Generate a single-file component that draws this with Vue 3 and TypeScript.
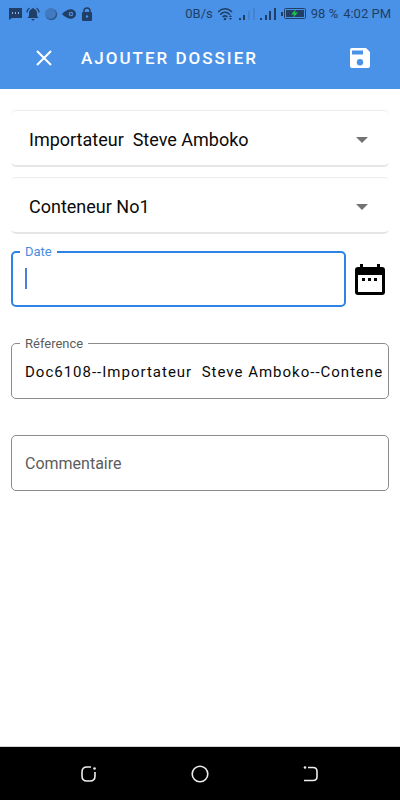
<script setup lang="ts">
import { ref } from 'vue'

const importer = ref('Importateur \u00a0Steve Amboko')
const container = ref('Conteneur No1')
const date = ref('')
const reference = ref('Doc6108--Importateur  Steve Amboko--Contene')
const comment = ref('')
</script>

<template>
  <div class="screen">
    <div class="status">
      <div class="notices">
        <svg width="14" height="14" viewBox="0 0 14 14"><path d="M1 1h13v10H4l-3 2z" fill="#203e66" /><path d="M4 5h1v2H4zM7 5h1v2H7zM10 5h1v2h-1z" fill="#8db9ee" /></svg>
        <svg width="14" height="14" viewBox="0 0 14 14"><path d="M7 1a1 1 0 0 1 1 1c2 .5 3 2 3 4v3l1.500 2h-11L3 9V6c0-2 1-3.500 3-4a1 1 0 0 1 1-1zM5.500 12h3a1.500 1.500 0 0 1-3 0z" fill="#203e66" /><path d="M1 5.500C1 3.500 2 2 3.500 1M13 5.500C13 3.500 12 2 10.500 1" fill="none" stroke="#203e66" stroke-width="1.200" /></svg>
        <svg width="14" height="14" viewBox="0 0 14 14"><circle cx="7.300" cy="7.300" r="5.900" fill="#2d568a" /><circle cx="6.500" cy="6.500" r="5.400" fill="#427abf" /></svg>
        <svg width="14" height="14" viewBox="0 0 14 14"><path d="M0 7c2-2.500 4-3 5.500-4C9 1 14 3 14 7s-5 6-8.500 4C4 10 2 9.500 0 7z" fill="#203e66" /><circle cx="9" cy="7" r="2.300" fill="#4a92e8" /><path d="M8.200 5.400L10.800 7 8.200 8.600z" fill="#203e66" /></svg>
        <svg width="14" height="14" viewBox="0 0 14 14"><path d="M4 6V4a3 3 0 0 1 6 0v2" fill="none" stroke="#203e66" stroke-width="1.500" /><rect x="2" y="5" width="10" height="9" rx="1" fill="#203e66" /><circle cx="7" cy="9.500" r="1.200" fill="#4a92e8" /></svg>
      </div>
      <div class="signals">
        <span>0B/s</span>
        <svg width="16" height="14" viewBox="0 0 16 14"><path d="M0 5c4-4.500 10-4.500 14 0M2.200 7.600c3-3 6.600-3 9.600 0M4.500 10c1.700-1.500 3.300-1.500 5 0" fill="none" stroke="#203e66" stroke-width="1.500" /><circle cx="7" cy="12" r="1.300" fill="#203e66" /><path d="M11 10l1.500-2 1.500 2M11 11h3l-1.500 2z" fill="#203e66" /></svg>
        <svg width="16" height="14" viewBox="0 0 16 14"><path d="M0 11h2v2H0zM4 8h2v5H4z" fill="#203e66" /><path d="M9 4h2v9H9zM14 1h2v12h-2z" fill="#4384d2" /></svg>
        <svg width="16" height="14" viewBox="0 0 16 14"><path d="M0 11h2v2H0zM5 8h2v5H5zM9 4h2v9H9zM14 1h2v12h-2z" fill="#203e66" /></svg>
        <svg width="25" height="14" viewBox="0 0 25 14"><path d="M0 5h2v4H0z" fill="#203e66" /><rect x="3.500" y="1.500" width="21" height="10" rx="1" fill="none" stroke="#203e66" /><path d="M5 3h18v7H5z" fill="#203e66" /><path d="M15 2l-5 5.500h3L12 11l5-5.500h-3z" fill="#20c04b" /></svg>
        <span>98 %</span>
        <span>4:02 PM</span>
      </div>
    </div>

    <header class="bar">
      <button class="icon-button" type="button" aria-label="Fermer">
        <svg width="16" height="16" viewBox="0 0 16 16"><path d="M1 1l14 14M15 1L1 15" stroke="#fff" stroke-width="2" /></svg>
      </button>
      <h1>AJOUTER DOSSIER</h1>
      <button class="icon-button" type="submit" form="folder" aria-label="Enregistrer">
        <svg width="22" height="22" viewBox="0 0 22 22"><path fill="#fff" fill-rule="evenodd" d="M3 1h14l4 4v14a2 2 0 0 1-2 2H3a2 2 0 0 1-2-2V3a2 2 0 0 1 2-2zM3 3.500v4h11v-4zM11 12a3.200 3.200 0 1 0 0 6.400 3.200 3.200 0 0 0 0-6.400z" /></svg>
      </button>
    </header>

    <form id="folder" class="form" @submit.prevent>
      <div class="card">
        <select v-model="importer" aria-label="Importateur">
          <option>{{ importer }}</option>
        </select>
        <svg class="arrow" width="12" height="6" viewBox="0 0 12 6"><path d="M0 0h12L6 6z" fill="#737373" /></svg>
      </div>
      <div class="card">
        <select v-model="container" aria-label="Conteneur">
          <option>{{ container }}</option>
        </select>
        <svg class="arrow" width="12" height="6" viewBox="0 0 12 6"><path d="M0 0h12L6 6z" fill="#737373" /></svg>
      </div>

      <div class="date-row">
        <div class="field active">
          <label for="date">Date</label>
          <input id="date" v-model="date" type="text" />
          <span class="caret"></span>
        </div>
        <button class="calendar" type="button" aria-label="Choisir une date">
          <svg width="30" height="34" viewBox="0 0 30 34"><path fill="#000" fill-rule="evenodd" d="M5 1h3v3h14V1h3v3h2a3 3 0 0 1 3 3v22a3 3 0 0 1-3 3H3a3 3 0 0 1-3-3V7a3 3 0 0 1 3-3h2zM3 12v17h24V12z" /><path d="M7 15h3v3H7zM13 15h3v3h-3zM19 15h3v3h-3z" /></svg>
        </button>
      </div>

      <div class="field">
        <label for="reference">Réference</label>
        <input id="reference" v-model="reference" type="text" />
      </div>

      <div class="field">
        <input v-model="comment" type="text" placeholder="Commentaire" aria-label="Commentaire" />
      </div>
    </form>

    <nav class="system">
      <button type="button" aria-label="Applications récentes">
        <svg width="18" height="18" viewBox="0 0 18 18"><path d="M11 2H7Q2 2 2 7v4q0 5 5 5h3q5 0 5-5V7" fill="none" stroke="#eee" stroke-width="1.600" /><circle cx="14.500" cy="3.500" r="1.300" fill="#eee" /></svg>
      </button>
      <button type="button" aria-label="Accueil">
        <svg width="18" height="18" viewBox="0 0 18 18"><circle cx="9" cy="9" r="7.800" fill="none" stroke="#eee" stroke-width="1.600" /></svg>
      </button>
      <button type="button" aria-label="Retour">
        <svg width="18" height="18" viewBox="0 0 18 18"><path d="M6 2.500h5q4 0 4 4v5q0 4-4 4H2" fill="none" stroke="#eee" stroke-width="1.600" /><circle cx="3" cy="2.500" r="1.300" fill="#eee" /></svg>
      </button>
    </nav>
  </div>
</template>

<style>
body {
  margin: 0;
  background: #fff;
}
</style>

<style scoped>
.screen {
  display: flex;
  flex-direction: column;
  min-height: 100vh;
  font-family: Roboto, sans-serif;
  color: #0a0a0a;
  background: #fff;
}

svg {
  display: block;
  flex: none;
}

button {
  display: flex;
  align-items: center;
  justify-content: center;
  padding: 0;
  border: 0;
  background: none;
}

.status {
  display: flex;
  align-items: center;
  justify-content: space-between;
  height: 27px;
  padding: 0 9px 0 8px;
  background: #4a92e8;
  color: #203e66;
  font-size: 13px;
  white-space: nowrap;
}

.notices,
.signals {
  display: flex;
  align-items: center;
  gap: 4px;
}

.signals {
  gap: 5px;
}

.bar {
  display: flex;
  align-items: center;
  height: 62px;
  padding: 0 20px 0 24px;
  background: #4a92e8;
}

.bar h1 {
  flex: 1;
  margin: 0 0 0 17px;
  color: #fff;
  font-size: 17px;
  font-weight: 500;
  letter-spacing: 2px;
}

.icon-button {
  width: 40px;
  height: 40px;
}

.form {
  flex: 1;
  padding: 21px 11px;
}

.card {
  position: relative;
  box-sizing: border-box;
  height: 57px;
  margin-bottom: 10px;
  border-top: 1px solid #ededed;
  border-bottom: 2px solid #e6e6e6;
  border-radius: 5px;
}

.card select {
  appearance: none;
  width: 100%;
  height: 100%;
  padding: 2px 40px 0 18px;
  border: 0;
  background: none;
  color: #0a0a0a;
  font-family: inherit;
  font-size: 18px;
}

.arrow {
  position: absolute;
  top: 26px;
  right: 21px;
  pointer-events: none;
}

.date-row {
  display: flex;
  align-items: center;
  gap: 8px;
  margin: 17px 3px 36px 0;
}

.date-row .field {
  flex: 1;
  margin: 0;
}

.calendar {
  width: 32px;
  height: 40px;
  padding-top: 2px;
}

.field {
  position: relative;
  box-sizing: border-box;
  height: 56px;
  margin-bottom: 36px;
  border: 1px solid #8c8c8c;
  border-radius: 5px;
}

.field input {
  box-sizing: border-box;
  width: 100%;
  height: 100%;
  padding: 1px 4px 0 13px;
  border: 0;
  outline: 0;
  background: none;
  color: #0a0a0a;
  font-family: inherit;
  font-size: 15px;
  letter-spacing: 1px;
}

.field input::placeholder {
  color: #5c5c5c;
  opacity: 1;
  font-size: 16px;
  letter-spacing: normal;
}

.field label {
  position: absolute;
  top: -8px;
  left: 8px;
  padding: 0 5px;
  background: #fff;
  color: #5c5c5c;
  font-size: 13px;
  line-height: 16px;
}

.field.active {
  border: 2px solid #2d84e6;
}

.field.active label {
  top: -9px;
  left: 7px;
  color: #4a8de0;
}

.caret {
  position: absolute;
  top: 15px;
  left: 12px;
  width: 2px;
  height: 21px;
  background: #4a80d8;
}

.system {
  display: flex;
  align-items: center;
  justify-content: space-around;
  height: 53px;
  padding: 0 34px;
  border-top: 1px solid #d0d4d4;
  background: #000;
}

.system button {
  width: 40px;
  height: 40px;
}
</style>
